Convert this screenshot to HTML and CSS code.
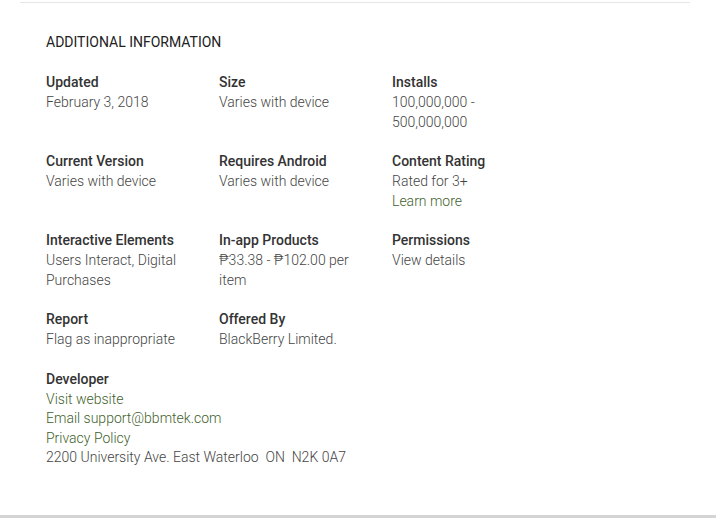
FILE: index.html
```html
<!DOCTYPE html>
<html>
<head>
<meta charset="utf-8">
<link rel="stylesheet" href="styles.css">
</head>
<body>
<div class="page">
  <div class="card">
    <h2 class="title">Additional Information</h2>
    <div class="grid">
      <div class="item">
        <div class="label">Updated</div>
        <div class="value">February 3, 2018</div>
      </div>
      <div class="item">
        <div class="label">Size</div>
        <div class="value">Varies with device</div>
      </div>
      <div class="item">
        <div class="label">Installs</div>
        <div class="value">100,000,000 - 500,000,000</div>
      </div>
      <div class="item">
        <div class="label">Current Version</div>
        <div class="value">Varies with device</div>
      </div>
      <div class="item">
        <div class="label">Requires Android</div>
        <div class="value">Varies with device</div>
      </div>
      <div class="item">
        <div class="label">Content Rating</div>
        <div class="value">Rated for 3+</div>
        <div class="value link">Learn more</div>
      </div>
      <div class="item">
        <div class="label">Interactive Elements</div>
        <div class="value">Users Interact, Digital Purchases</div>
      </div>
      <div class="item">
        <div class="label">In-app Products</div>
        <div class="value">₱33.38 - ₱102.00 per item</div>
      </div>
      <div class="item">
        <div class="label">Permissions</div>
        <div class="value">View details</div>
      </div>
      <div class="item">
        <div class="label">Report</div>
        <div class="value">Flag as inappropriate</div>
      </div>
      <div class="item">
        <div class="label">Offered By</div>
        <div class="value">BlackBerry Limited.</div>
      </div>
      <div class="item empty"></div>
      <div class="item wide">
        <div class="label">Developer</div>
        <div class="value link">Visit website</div>
        <div class="value link">Email support@bbmtek.com</div>
        <div class="value link">Privacy Policy</div>
        <div class="value nowrap">2200 University Ave. East Waterloo&nbsp; ON&nbsp; N2K 0A7</div>
      </div>
    </div>
  </div>
  <div class="bottom-bar"></div>
</div>
</body>
</html>
```
FILE: styles.css
```css
html, body {
  margin: 0;
  padding: 0;
  background: #ffffff;
}
body {
  font-family: Roboto, "Liberation Sans", Arial, sans-serif;
  color: #333333;
}
.page {
  width: 716px;
  height: 518px;
  display: flex;
  flex-direction: column;
}
.card {
  flex: 1;
  margin: 2px 26px 0 20px;
  border-top: 1px solid #e6e6e6;
  padding: 0 0 0 26px;
}
.title {
  margin: 29px 0 0 0;
  font-size: 14px;
  font-weight: 400;
  line-height: 20px;
  text-transform: uppercase;
  color: #212121;
  letter-spacing: 0;
}
.grid {
  margin-top: 20px;
  display: grid;
  grid-template-columns: 173px 173px 173px;
  row-gap: 19px;
}
.item.wide {
  grid-column: 1 / span 3;
}
.label {
  font-size: 14px;
  font-weight: 500;
  line-height: 20px;
  color: #333333;
  margin-bottom: 1px;
}
.value {
  font-size: 14px;
  font-weight: 300;
  line-height: 19.5px;
  color: #444444;
  padding-right: 20px;
}
.value.link {
  color: #3f5f2c;
}
.value.nowrap {
  white-space: nowrap;
}
.bottom-bar {
  height: 3px;
  background: #d4d4d4;
}
```
